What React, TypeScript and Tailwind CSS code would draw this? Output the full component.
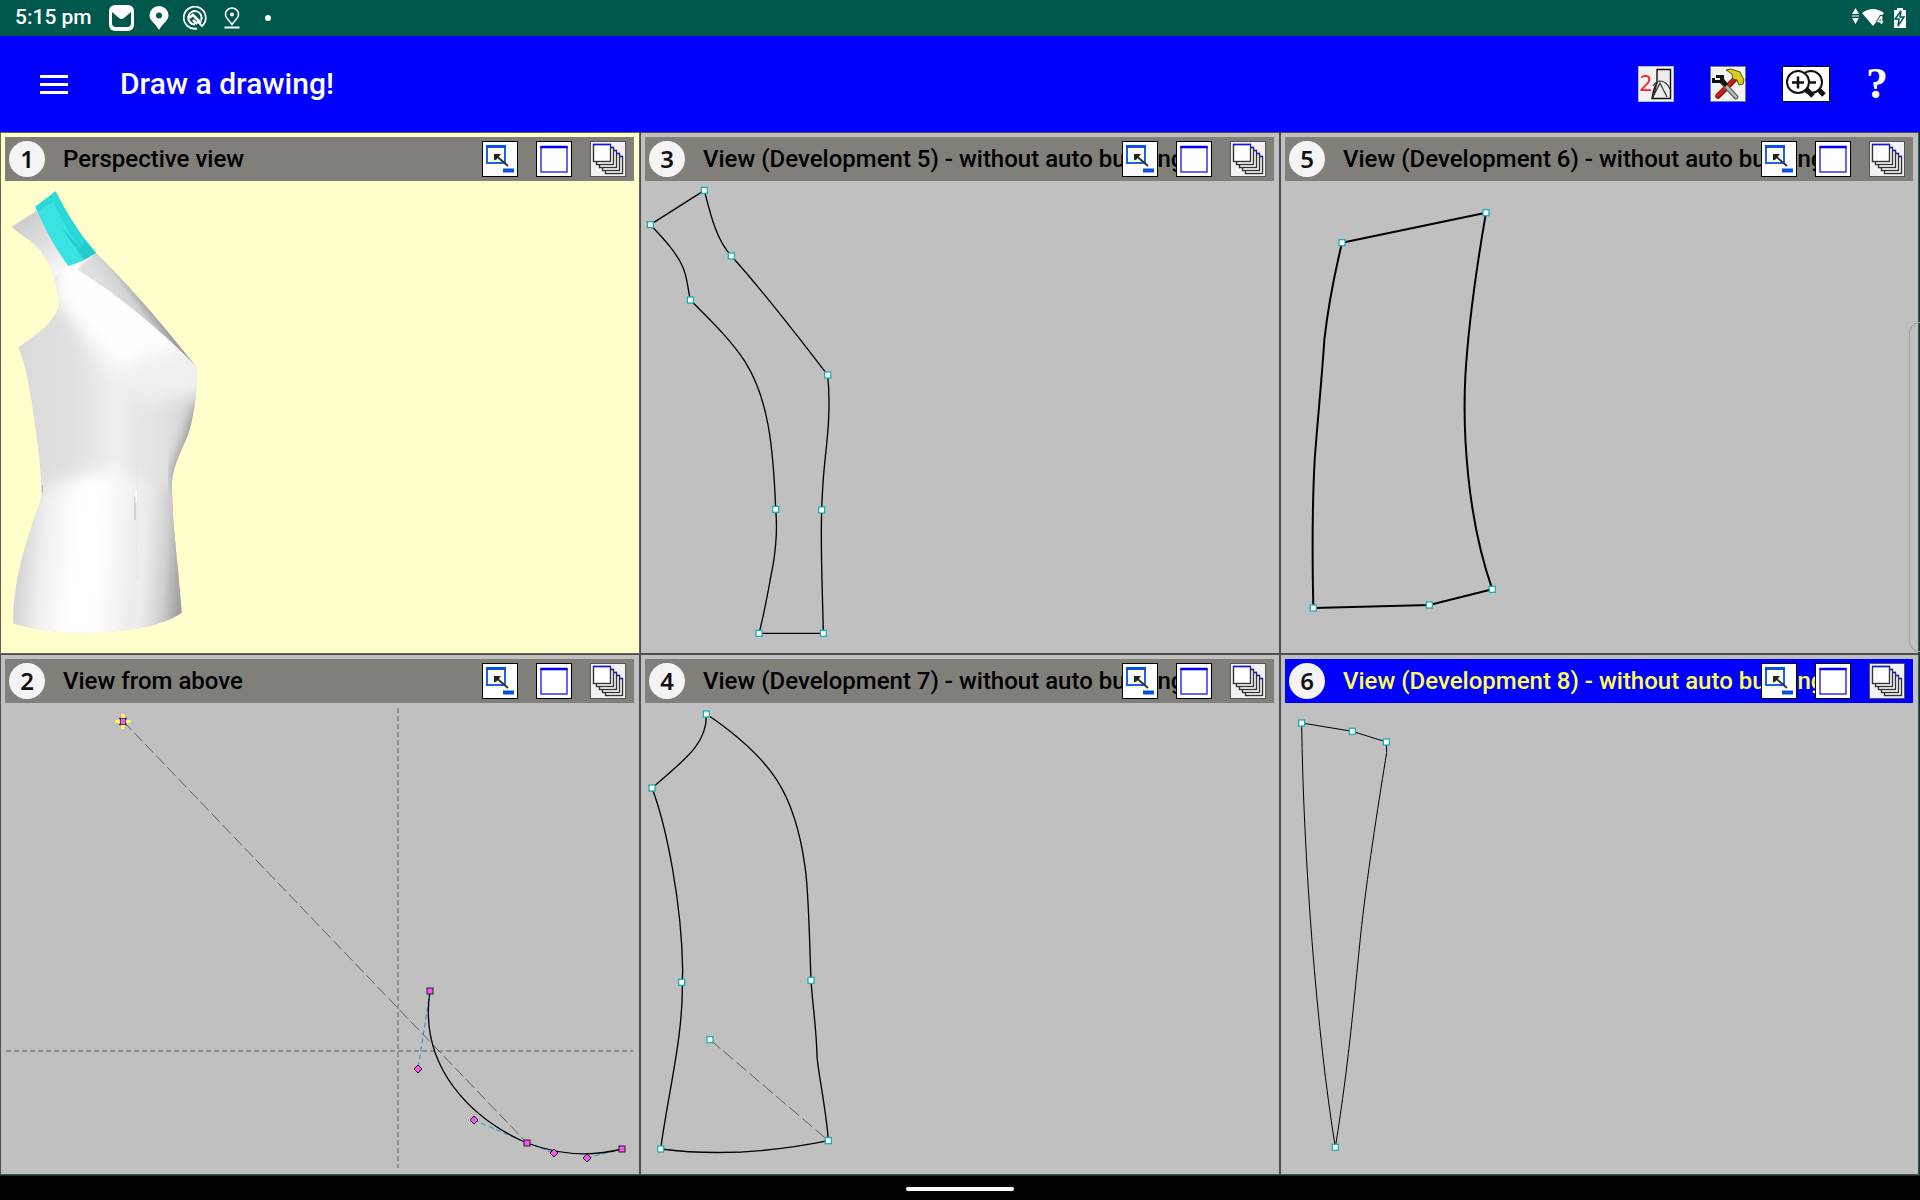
import type { ReactNode } from 'react';

type Point = [number, number];

function MinimizeIcon() {
  return (
    <svg viewBox="0 0 36 36" className="size-9">
      <rect x="0.5" y="0.5" width="35" height="35" fill="#fff" stroke="#000" />
      <rect x="5" y="6" width="18" height="16" fill="none" stroke="#1a63e8" strokeWidth="2" />
      <path d="M4 5.5h20" stroke="#0a4fe0" strokeWidth="3" />
      <path d="M15 15.500l11 9.500" stroke="#333" strokeWidth="2" />
      <path d="M12 13h7l-2 2.500l-2.500 3l-2.500 1z" fill="#222" />
      <path d="M21 29.500h11" stroke="#0a4fe0" strokeWidth="4" />
    </svg>
  );
}

function MaximizeIcon() {
  return (
    <svg viewBox="0 0 36 36" className="size-9">
      <rect x="0.5" y="0.5" width="35" height="35" fill="#fff" stroke="#000" />
      <rect x="5" y="6" width="26" height="25" fill="#fff" stroke="#1414f0" strokeWidth="1.3" />
      <path d="M4.400 6h27.200" stroke="#0000f5" strokeWidth="2.500" />
    </svg>
  );
}

function StackIcon() {
  return (
    <svg viewBox="0 0 36 36" className="size-9">
      <rect x="0.5" y="0.5" width="35" height="35" fill="#f2f2f2" stroke="#555" />
      {[12, 9, 6, 3, 0].map((o) => (
        <g key={o}>
          <rect x={3.5 + o} y={3.5 + o} width="17" height="17" fill="#fff" stroke="#333" strokeWidth="1.4" />
          <path d={`M${3 + o} ${3.5 + o}h18`} stroke="#1414f0" strokeWidth="1.4" />
        </g>
      ))}
    </svg>
  );
}

function Handle({ at: [x, y] }: { at: Point }) {
  return <rect x={x - 9} y={y - 9} width="18" height="18" fill="#fff" stroke="#1fb0b0" strokeWidth="4" />;
}

// Outline coordinates are stored at three units per pixel
function Outline({ d, points, shift, width = 4, children }: {
  d: string;
  points: Point[];
  shift: Point;
  width?: number;
  children?: ReactNode;
}) {
  return (
    <g transform={`translate(${shift[0]} ${shift[1]}) scale(0.33333)`}>
      <path d={d} fill="none" stroke="#000" strokeWidth={width} strokeLinejoin="round" />
      {children}
      {points.map((p) => (
        <Handle key={p.join()} at={p} />
      ))}
    </g>
  );
}

function Torso() {
  return (
    <g transform="translate(-5 -1) scale(0.33333)">
      <defs>
        <clipPath id="body">
          <path d="M36 140L110 92L205 258L288 218C380 310 470 410 580 550L591 565C592 650 580 720 562 770C530 840 513 880 516 930C518 1020 526 1090 533 1160L545 1298C490 1335 400 1358 240 1358C150 1358 90 1345 40 1330C38 1200 80 1080 125 950C125 850 95 650 75 560L55 502C90 475 140 445 160 410C180 385 178 365 172 340C165 290 155 260 120 210C90 175 60 165 36 140Z" />
        </clipPath>
        <linearGradient id="waist" gradientUnits="userSpaceOnUse" x1="60" y1="0" x2="590" y2="0">
          <stop offset="0" stopColor="#dadada" />
          <stop offset="0.3" stopColor="#e1e1e1" />
          <stop offset="0.55" stopColor="#efefef" />
          <stop offset="0.65" stopColor="#e8e8e8" />
          <stop offset="0.8" stopColor="#e2e2e2" />
          <stop offset="1" stopColor="#d6d6d6" />
        </linearGradient>
        <linearGradient id="hip" gradientUnits="userSpaceOnUse" x1="40" y1="1150" x2="545" y2="1190">
          <stop offset="0" stopColor="#cfcfcf" />
          <stop offset="0.18" stopColor="#f1f1f1" />
          <stop offset="0.36" stopColor="#ffffff" />
          <stop offset="0.5" stopColor="#ffffff" />
          <stop offset="0.72" stopColor="#ececec" />
          <stop offset="0.76" stopColor="#efefef" />
          <stop offset="0.9" stopColor="#cfcfcf" />
          <stop offset="1" stopColor="#9a9a9a" />
        </linearGradient>
        <linearGradient id="neck" gradientUnits="userSpaceOnUse" x1="60" y1="120" x2="190" y2="300">
          <stop offset="0" stopColor="#cccccc" />
          <stop offset="0.5" stopColor="#e2e2e2" />
          <stop offset="1" stopColor="#ffffff" />
        </linearGradient>
        <linearGradient id="lapel" gradientUnits="userSpaceOnUse" x1="370" y1="400" x2="440" y2="350">
          <stop offset="0" stopColor="#dfdfdf" />
          <stop offset="0.5" stopColor="#d2d2d2" />
          <stop offset="1" stopColor="#8e8e8e" />
        </linearGradient>
        <filter id="soft" x="-50%" y="-50%" width="200%" height="200%">
          <feGaussianBlur stdDeviation="22" />
        </filter>
      </defs>
      <g clipPath="url(#body)">
        <path d="M0 0H600V1400H0Z" fill="url(#waist)" />
        <path d="M175 350L232 268L620 540V640L440 670L340 620Z" fill="#f0f0f0" filter="url(#soft)" />
        <path d="M175 350L165 220L250 230L560 500L440 530L350 570Z" fill="#fefefe" filter="url(#soft)" />
        <path d="M610 680C590 730 590 770 555 840C540 880 535 930 545 1000" fill="none" stroke="#686868" strokeWidth="36" filter="url(#soft)" />
        <path d="M0 960C120 930 250 880 340 870C420 900 480 930 640 930V1420H0Z" fill="url(#hip)" filter="url(#soft)" />
        <path d="M20 1000H640V1400H20Z" fill="url(#hip)" opacity="0.6" />
        <path d="M20 140L110 80L205 258L165 290L120 210Z" fill="url(#neck)" />
        <path d="M411 740V1200" stroke="#e0e0e0" strokeWidth="2" />
        <path d="M232 268L288 218C380 300 470 405 590 560C470 440 360 350 232 268Z" fill="url(#lapel)" />
      </g>
      <path d="M405 950V1020M127 915V938" stroke="#999" strokeWidth="2" />
      <path d="M409 930V968" stroke="#fff" strokeWidth="5" />
      <path d="M167 34L106 80C135 150 170 210 205 258C235 250 265 235 288 218C240 165 200 100 167 34Z" fill="#38e3e2" />
      <path d="M167 34L106 80L112 94L160 66C190 130 225 190 262 234L288 218C240 165 200 100 167 34Z" fill="#2bd8d7" />
      <path d="M184 140C205 175 235 210 250 239L288 218C275 205 265 193 255 180L240 205Z" fill="#25cccc" />
    </g>
  );
}

function AboveView() {
  const anchors: Point[] = [[425, 288], [522, 440], [617, 446]];
  const controls: Point[] = [[413, 366], [469, 417], [549, 450], [582, 455]];
  return (
    <g fill="none">
      <path d="M393 5V465M1 348H628" stroke="#808080" strokeWidth="1.5" strokeDasharray="5 3" />
      <path d="M118 18L522 440" stroke="#606060" strokeDasharray="12 4" />
      <path d="M425 288L413 366M469 417L522 440L549 450M582 455L617 446" stroke="#2492d0" strokeDasharray="5 3" />
      <path d="M425 288C413 366 469 417 522 440C549 450 582 455 617 446" stroke="#000" strokeWidth="1.3" />
      <path d="M110.500 18.500h15M118 11v15" stroke="#ffff50" strokeWidth="3" />
      <path d="M114.500 15l7 7M114.500 22l7 -7" stroke="#222" strokeWidth="1.500" />
      <rect x="115.5" y="15.5" width="5" height="6" fill="#ff50ff" stroke="#222" strokeWidth="0.7" />
      {anchors.map(([x, y]) => (
        <rect key={x} x={x - 3} y={y - 3} width="6" height="6" fill="#ff50ff" stroke="#222" />
      ))}
      {controls.map(([x, y]) => (
        <path key={x} d={`M${x - 4} ${y}l4 -4l4 4l-4 4z`} fill="#ff50ff" stroke="#000" />
      ))}
    </g>
  );
}

const views = [
  { id: 1, title: 'Perspective view', drawing: <Torso /> },
  {
    id: 3,
    title: 'View (Development 5) - without auto building',
    drawing: (
      <Outline
        shift={[-5, -1]}
        d="M193 31L31 134C80 185 110 220 128 260C142 290 143 325 151 360C200 410 270 475 315 545C385 655 400 800 407 988C412 1040 408 1100 400 1150C385 1225 378 1280 357 1360H550C548 1240 541 1120 545 990C547 930 550 890 554 850C560 790 574 690 563 585C470 465 380 345 274 228C230 180 213 110 193 31Z"
        points={[[193, 31], [31, 134], [151, 360], [407, 988], [357, 1360], [550, 1360], [545, 990], [563, 585], [274, 228]]}
      />
    ),
  },
  {
    id: 5,
    title: 'View (Development 6) - without auto building',
    drawing: (
      <Outline
        shift={[15, 9]}
        width={6}
        d="M126 158L558 68C530 230 505 400 496 560C488 720 500 980 577 1198L388 1245L40 1254C36 1080 36 960 44 810C52 700 66 560 73 450C84 350 104 250 126 158Z"
        points={[[126, 158], [558, 68], [577, 1198], [388, 1245], [40, 1254]]}
      />
    ),
  },
  { id: 2, title: 'View from above', drawing: <AboveView /> },
  {
    id: 4,
    title: 'View (Development 7) - without auto building',
    drawing: (
      <Outline
        shift={[-5, -13]}
        d="M199 72C203 165 125 215 36 294C80 410 125 640 128 840L127 877C130 1040 84 1210 62 1377C220 1397 380 1390 565 1352C560 1270 535 1150 531 1100C530 1020 518 950 513 871C508 740 506 600 495 530C465 310 395 205 199 72Z"
        points={[[199, 72], [36, 294], [125, 877], [62, 1377], [565, 1352], [513, 871], [210, 1049]]}
      >
        <path d="M210 1049L565 1352" stroke="#606060" strokeWidth="3" strokeDasharray="40 12" />
      </Outline>
    ),
  },
  {
    id: 6,
    title: 'View (Development 8) - without auto building',
    active: true,
    drawing: (
      <Outline
        shift={[-5, -63]}
        width={3}
        d="M65 249L217 274L319 306L320 338C300 460 265 680 245 857C225 1040 210 1250 166 1522C110 1180 70 650 65 249Z"
        points={[[65, 249], [217, 274], [319, 306], [166, 1522]]}
      />
    ),
  },
];

function ViewPanel({ id, title, active, drawing }: {
  id: number;
  title: string;
  active?: boolean;
  drawing: ReactNode;
}) {
  return (
    <section className={`flex min-w-0 flex-col border border-black/60 p-1 pr-[5px] ${id === 1 ? 'bg-[#ffffcc]' : 'bg-[#c0c0c0]'}`}>
      <header className={`relative flex h-11 items-center gap-[18px] px-1 ${active ? 'bg-[#0000ff] text-[#ffff50]' : 'bg-[#807f7a] text-black'}`}>
        <span className="flex size-9 shrink-0 items-center justify-center rounded-full bg-[#f4f4f4] font-['Noto_Sans'] text-2xl font-semibold text-[#111]">
          {id}
        </span>
        <h2 className="overflow-hidden text-2xl font-medium whitespace-nowrap">{title}</h2>
        <div className="absolute top-1 right-2 flex gap-[18px]">
          <button type="button" aria-label="Minimize view"><MinimizeIcon /></button>
          <button type="button" aria-label="Maximize view"><MaximizeIcon /></button>
          <button type="button" aria-label="Layers"><StackIcon /></button>
        </div>
      </header>
      <svg className="w-full flex-1">{drawing}</svg>
    </section>
  );
}

function StatusBar() {
  return (
    <div className="flex h-9 items-center justify-between bg-[#00574b] pr-[14px] pl-[15px] text-white">
      <div className="flex items-center">
        <span className="mr-[17px] text-[21px] font-medium">5:15 pm</span>
        <svg viewBox="0 0 26 26" className="mr-[14px] size-[26px]">
          <rect width="25" height="26" rx="6" fill="#fff" />
          <path d="M3 7v11q0 4 4 4h11q4 0 4 -4v-11l-7 6q-2.500 2 -5 0z" fill="#00574b" />
        </svg>
        <svg viewBox="0 0 20 24" className="mr-[14px] h-6 w-5">
          <path fillRule="evenodd" d="M10 0a9.500 9.500 0 0 1 9.500 9.500c0 5 -6 8 -9.500 14.500c-3.500 -6.500 -9.500 -9.500 -9.500 -14.500a9.500 9.500 0 0 1 9.500 -9.500zM10 6.500a3 3 0 1 0 0 6a3 3 0 1 0 0 -6z" fill="#fff" />
        </svg>
        <svg viewBox="0 0 24 24" className="mr-4 size-6" fill="none" stroke="#fff">
          <path d="M14 22.500a11 11 0 1 1 5 -2.500l-5 -5" strokeWidth="1.800" />
          <path d="M12 18.500a6.700 6.700 0 1 1 6 -4" strokeWidth="2" />
          <path d="M6 12l4 -3l8 8M10 14l4 4" strokeWidth="2.500" />
        </svg>
        <svg viewBox="0 0 18 22" className="mr-6 h-[22px] w-[18px]" fill="none" stroke="#fff">
          <path d="M9 1a6.500 6.500 0 0 1 6.500 6.500c0 4 -4 6 -6.500 10c-2.500 -4 -6.500 -6 -6.500 -10a6.500 6.500 0 0 1 6.500 -6.500z" strokeWidth="1.500" />
          <circle cx="9" cy="7.500" r="2" fill="#fff" stroke="none" />
          <path d="M1.500 20.500h15" strokeWidth="2" />
        </svg>
        <span className="size-[6px] rounded-full bg-white" />
      </div>
      <svg viewBox="0 0 56 24" className="h-6 w-14" fill="#fff">
        <path d="M2 8l3.500 -6l3.500 6zM2 12l3.500 6l3.500 -6zM2 9.500h7v1h-7z" />
        <path d="M12 7q11 -8 22 0l-11 13z" />
        <text x="27" y="18" fontSize="11" fontWeight="700" stroke="#00574b" strokeWidth="2" paintOrder="stroke">4</text>
        <path d="M44 4h3v-2h6v2h3v18h-12z" />
        <path d="M51 5l-6 8h4l-1 7l6 -9h-4z" stroke="#00574b" strokeWidth="1.500" />
      </svg>
    </div>
  );
}

function AppBar() {
  return (
    <header className="flex h-24 items-center bg-[#0000ff] pr-8 pl-10 text-white">
      <button type="button" aria-label="Menu" className="mr-[52px] flex w-7 flex-col gap-[5px]">
        <span className="h-[3px] w-full bg-white" />
        <span className="h-[3px] w-full bg-white" />
        <span className="h-[3px] w-full bg-white" />
      </button>
      <h1 className="text-[30px] leading-9 font-medium">Draw a drawing!</h1>
      <div className="ml-auto flex items-center gap-9">
        <button type="button" aria-label="Second drawing">
          <svg viewBox="0 0 36 36" className="size-9">
            <rect x="0.5" y="0.5" width="35" height="35" fill="#f2f2f2" stroke="#b8b8b8" />
            <path d="M19 3.500h13.500v29H14C15 25 17 20 19 17z" fill="#ececec" stroke="#111" strokeWidth="1.400" />
            <path d="M15 20q3 -5 8 -5q6 1 9 8M14.500 32l7.500 -15l7 14M19 17l-4 15" fill="none" stroke="#333" strokeWidth="1.200" />
            <text x="1.500" y="25" fontSize="22" fontFamily="Noto Sans, sans-serif" fill="#ff2020">2</text>
          </svg>
        </button>
        <button type="button" aria-label="Tools">
          <svg viewBox="0 0 36 36" className="size-9">
            <rect x="0.5" y="0.5" width="35" height="35" fill="#f2f2f2" stroke="#777" />
            <path d="M8 30L25 13" stroke="#8a1010" strokeWidth="5.500" strokeLinecap="round" />
            <path d="M7.500 30L25 12.500" stroke="#d81c1c" strokeWidth="3" strokeLinecap="round" />
            <path d="M12 16L26 31" stroke="#666" strokeWidth="5" strokeLinecap="round" />
            <path d="M12 16L26 31" stroke="#bbb" strokeWidth="2.500" strokeLinecap="round" />
            <path d="M2 12v5h9l4 4l3 -3l-4 -5V9H6v3h4v2H5v-2z" fill="#111" />
            <path d="M16 4l5 -1l9 3l4 8l-1 4l-4 1l-2 -5l-4 -1l-1 -5z" fill="#d8cc20" stroke="#5a5310" />
          </svg>
        </button>
        <button type="button" aria-label="Zoom">
          <svg viewBox="0 0 48 36" className="h-9 w-12" fill="none" stroke="#111">
            <rect x="0.5" y="0.5" width="47" height="35" fill="#fff" stroke="#000" />
            <path d="M35 22l7 7" strokeWidth="5" />
            <circle cx="29" cy="16" r="11" fill="#fff" strokeWidth="2" />
            <path d="M28 16.500h6" strokeWidth="2.500" />
            <path d="M23 22l8 8" strokeWidth="5" />
            <circle cx="16" cy="16" r="11" fill="#fff" strokeWidth="2" />
            <path d="M10 16.500h12M16 10.500v12" strokeWidth="2.500" />
          </svg>
        </button>
        <button type="button" aria-label="Help" className="w-[22px] text-center font-['Liberation_Serif'] text-[44px] leading-9 font-bold">
          ?
        </button>
      </div>
    </header>
  );
}

export default function App() {
  return (
    <div className="flex min-h-screen flex-col bg-black font-[Roboto,sans-serif]">
      <StatusBar />
      <AppBar />
      <main className="relative grid flex-1 grid-cols-[640fr_640fr_639fr] grid-rows-[522fr_521fr] bg-[#003f38] pr-px pb-px">
        {views.map((view) => (
          <ViewPanel key={view.id} {...view} />
        ))}
        {/* edge panel handle */}
        <div className="absolute top-[190px] right-0 h-[330px] w-[11px] rounded-l-xl border border-r-0 border-[#a0a0a0]" />
      </main>
      <nav className="flex h-6 items-center justify-center pt-[2px]">
        <button type="button" aria-label="Home" className="h-1 w-27 rounded-full bg-white" />
      </nav>
    </div>
  );
}
